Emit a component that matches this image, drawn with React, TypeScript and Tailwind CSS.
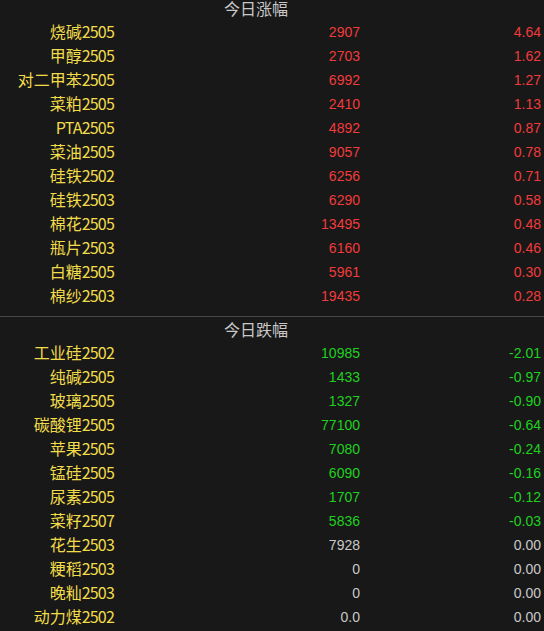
import React from "react";

type Row = {
  name: string;
  price: string;
  change: string;
};

// 涨幅榜
const gainers: Row[] = [
  { name: "烧碱2505", price: "2907", change: "4.64" },
  { name: "甲醇2505", price: "2703", change: "1.62" },
  { name: "对二甲苯2505", price: "6992", change: "1.27" },
  { name: "菜粕2505", price: "2410", change: "1.13" },
  { name: "PTA2505", price: "4892", change: "0.87" },
  { name: "菜油2505", price: "9057", change: "0.78" },
  { name: "硅铁2502", price: "6256", change: "0.71" },
  { name: "硅铁2503", price: "6290", change: "0.58" },
  { name: "棉花2505", price: "13495", change: "0.48" },
  { name: "瓶片2503", price: "6160", change: "0.46" },
  { name: "白糖2505", price: "5961", change: "0.30" },
  { name: "棉纱2503", price: "19435", change: "0.28" },
];

// 跌幅榜
const losers: Row[] = [
  { name: "工业硅2502", price: "10985", change: "-2.01" },
  { name: "纯碱2505", price: "1433", change: "-0.97" },
  { name: "玻璃2505", price: "1327", change: "-0.90" },
  { name: "碳酸锂2505", price: "77100", change: "-0.64" },
  { name: "苹果2505", price: "7080", change: "-0.24" },
  { name: "锰硅2505", price: "6090", change: "-0.16" },
  { name: "尿素2505", price: "1707", change: "-0.12" },
  { name: "菜籽2507", price: "5836", change: "-0.03" },
  { name: "花生2503", price: "7928", change: "0.00" },
  { name: "粳稻2503", price: "0", change: "0.00" },
  { name: "晚籼2503", price: "0", change: "0.00" },
  { name: "动力煤2502", price: "0.0", change: "0.00" },
];

function colorOf(change: string) {
  const v = parseFloat(change);
  if (v > 0) return "text-[#f23b3b]";
  if (v < 0) return "text-[#1fd01f]";
  return "text-[#c8c8c8]";
}

function Name({ name }: { name: string }) {
  // split CJK prefix from the ascii code part
  const idx = name.search(/[A-Za-z0-9]/);
  const cn = idx === -1 ? name : name.slice(0, idx);
  const code = idx === -1 ? "" : name.slice(idx);
  return (
    <span className="whitespace-nowrap font-['Noto_Sans_CJK_SC',sans-serif] text-[16px] text-[#f2dc4a]">
      {cn}
      <span className="tracking-[-0.8px]">{code}</span>
    </span>
  );
}

function Table({ rows }: { rows: Row[] }) {
  return (
    <div>
      {rows.map((r) => (
        <div
          key={r.name}
          className="grid h-[24px] grid-cols-[116px_244px_1fr] items-center pr-[3px] leading-none"
        >
          <div className="pr-[2px] text-right">
            <Name name={r.name} />
          </div>
          <div className={`text-right text-[14px] ${colorOf(r.change)}`}>{r.price}</div>
          <div className={`text-right text-[14px] ${colorOf(r.change)}`}>{r.change}</div>
        </div>
      ))}
    </div>
  );
}

export default function App() {
  return (
    <div className="h-[631px] w-[544px] overflow-hidden bg-[#181818] font-['Liberation_Sans',Arial,sans-serif]">
      <div className="pb-2">
        <div className="flex h-[20px] items-start justify-center pt-px pr-[32px] font-['Noto_Sans_CJK_SC',sans-serif] text-[16px] leading-[15px] text-[#c8c8c8]">
          今日涨幅
        </div>
        <Table rows={gainers} />
      </div>
      <div className="border-t border-[#474747]">
        <div className="flex h-[24px] items-center justify-center pr-[32px] font-['Noto_Sans_CJK_SC',sans-serif] text-[16px] leading-none text-[#c8c8c8]">
          今日跌幅
        </div>
        <Table rows={losers} />
      </div>
    </div>
  );
}
